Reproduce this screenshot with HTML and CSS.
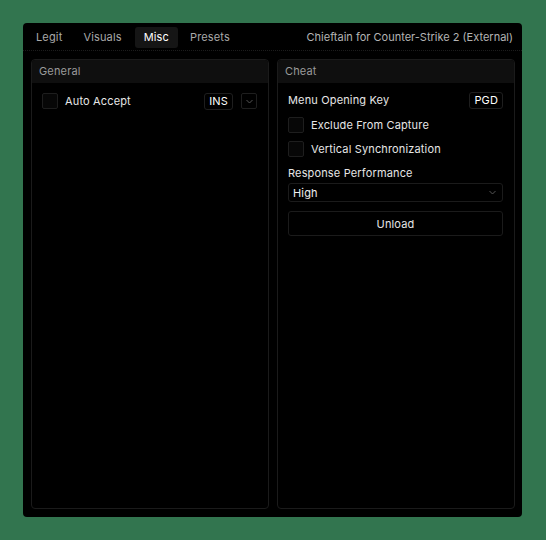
FILE: index.html
```html
<html>
    <head>
        <meta charset="utf-8">
        <link rel="stylesheet" href="styles.css">
    </head>
    <body>
        <div class="window">
            <div class="topbar">
                <div class="tabs">
                    <span class="tab">Legit</span>
                    <span class="tab">Visuals</span>
                    <span class="tab active">Misc</span>
                    <span class="tab">Presets</span>
                </div>
                <span class="title">Chieftain for Counter-Strike 2 (External)</span>
            </div>
            <div class="panels">
                <div class="panel">
                    <div class="panel-head">General</div>
                    <div class="panel-body">
                        <div class="row">
                            <span class="check"></span>
                            <span class="label">Auto Accept</span>
                            <span class="key">INS</span>
                            <span class="mini-arrow">
                                <svg width="7" height="5" viewBox="0 0 7 5"><path d="M0.5 1 L3.5 4 L6.5 1" fill="none" stroke="#555" stroke-width="1"/></svg>
                            </span>
                        </div>
                    </div>
                </div>
                <div class="panel">
                    <div class="panel-head">Cheat</div>
                    <div class="panel-body">
                        <div class="row keyrow">
                            <span class="text">Menu Opening Key</span>
                            <span class="key">PGD</span>
                        </div>
                        <div class="row">
                            <span class="check"></span>
                            <span class="label">Exclude From Capture</span>
                        </div>
                        <div class="row">
                            <span class="check"></span>
                            <span class="label">Vertical Synchronization</span>
                        </div>
                        <div class="caption">Response Performance</div>
                        <div class="combo">
                            <span>High</span>
                            <svg width="7" height="5" viewBox="0 0 7 5"><path d="M0.5 1 L3.5 4 L6.5 1" fill="none" stroke="#555" stroke-width="1"/></svg>
                        </div>
                        <div class="button">Unload</div>
                    </div>
                </div>
            </div>
        </div>
    </body>
</html>
```
FILE: styles.css
```css
body {
    margin: 0;
    background-color: #32754f;
    font-family: Inter, "Liberation Sans", sans-serif;
    font-size: 11px;
    letter-spacing: 0.15px;
    color: #e6e6e6;
}
.window {
    margin: 23px 0 0 23px;
    width: 499px;
    height: 494px;
    background-color: #000;
    border-radius: 4px;
    display: flex;
    flex-direction: column;
}
.topbar {
    height: 28px;
    display: flex;
    align-items: center;
    justify-content: space-between;
    padding: 0 9px 0 5px;
    border-bottom: 1px dotted #1c1c1c;
    box-sizing: border-box;
}
.tabs {
    display: flex;
    padding-top: 1px;
}
.tab {
    padding: 3px 8px 4px;
    color: #a9a9a9;
    border-radius: 3px;
    margin-right: 5px;
}
.tab.active {
    background-color: #151515;
    color: #fff;
    padding: 3px 9px 4px;
    margin-right: 4px;
}
.title {
    color: #b4b4b4;
    letter-spacing: 0;
    padding-top: 1px;
}
.panels {
    flex: 1;
    display: grid;
    grid-template-columns: 238px 238px;
    gap: 8px;
    padding: 8px 7px 8px 8px;
}
.panel {
    border: 1px solid #1b1b1b;
    border-radius: 4px;
    display: flex;
    flex-direction: column;
}
.panel-head {
    height: 23px;
    line-height: 23px;
    padding-left: 7px;
    color: #9a9a9a;
    background-color: #0f0f0f;
    border-radius: 3px 3px 0 0;
}
.panel-body {
    padding: 10px 11px 10px 10px;
    display: flex;
    flex-direction: column;
}
.row {
    display: flex;
    align-items: center;
    height: 16px;
    margin-bottom: 8px;
}
.check {
    width: 14px;
    height: 14px;
    border: 1px solid #1e1e1e;
    border-radius: 2px;
    background-color: #070707;
    margin-right: 7px;
}
.label {
    flex: 1;
}
.key {
    border: 1px solid #1e1e1e;
    border-radius: 3px;
    padding: 1px 4px;
    color: #fff;
    line-height: 13px;
}
.mini-arrow {
    width: 14px;
    height: 14px;
    border: 1px solid #1e1e1e;
    border-radius: 2px;
    margin-left: 8px;
    display: flex;
    align-items: center;
    justify-content: center;
}
.keyrow {
    justify-content: space-between;
    margin-top: -1px;
    margin-bottom: 9px;
}
.caption {
    height: 14px;
    line-height: 16px;
}
.combo {
    margin-top: 4px;
    height: 17px;
    border: 1px solid #1b1b1b;
    border-radius: 3px;
    display: flex;
    align-items: center;
    justify-content: space-between;
    padding: 0 6px 0 4px;
    color: #f0f0f0;
}
.button {
    margin-top: 9px;
    height: 23px;
    line-height: 24px;
    border: 1px solid #1b1b1b;
    border-radius: 3px;
    text-align: center;
    color: #e6e6e6;
}
```
